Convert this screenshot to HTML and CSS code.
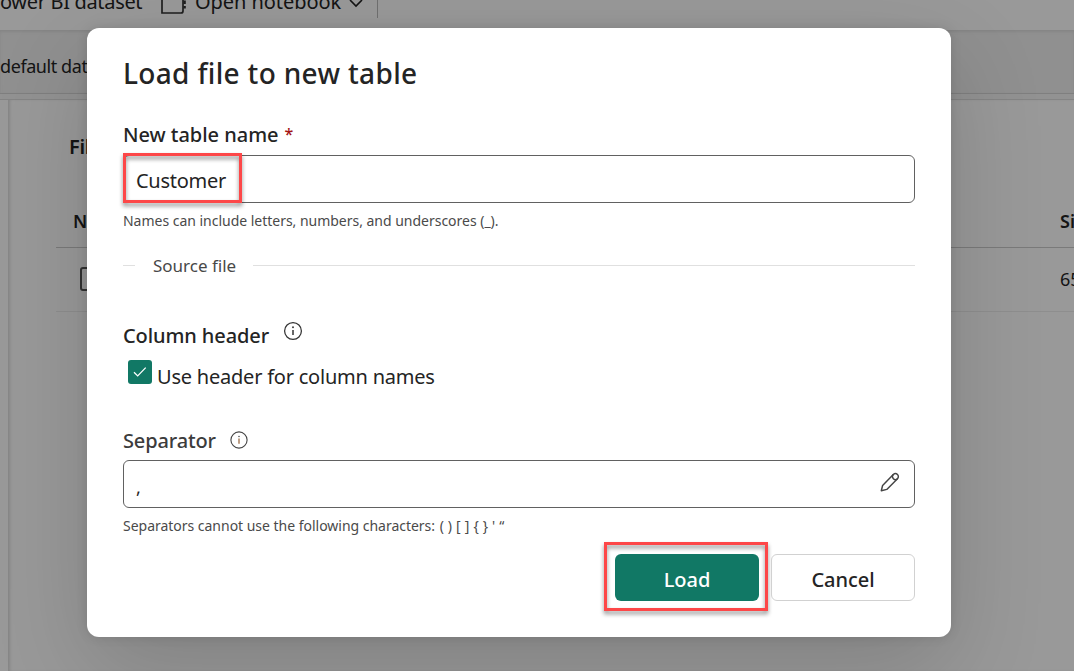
FILE: index.html
```html
<!DOCTYPE html>
<html lang="en">
<head>
<meta charset="utf-8">
<title>Load file to new table</title>
<link rel="stylesheet" href="styles.css">
</head>
<body>
<div class="app">
  <div class="toolbar">
    <span class="tool-dataset">ower BI dataset</span>
    <svg class="notebook-icon" width="28" height="28" viewBox="0 0 28 28" fill="none" stroke="#333" stroke-width="1.7"><path d="M4 2h17a2 2 0 0 1 2 2v19a2 2 0 0 1-2 2H2V4a2 2 0 0 1 2-2z"/><path d="M24.6 5v3M24.6 12.5v3.5M24.6 18v2.5" stroke-width="2.4"/></svg>
    <span class="tool-notebook">Open notebook</span>
    <svg class="chevron" width="14" height="9" viewBox="0 0 14 9" fill="none" stroke="#222" stroke-width="1.6"><path d="M1 1l6 6 6-6"/></svg>
    <span class="tool-divider"></span>
  </div>
  <div class="subbar"><span>default dat</span></div>
  <div class="workspace">
    <div class="rail"></div>
    <div class="files">
      <div class="files-title">Files</div>
      <div class="table-head"><span>Name</span><span class="size">Size</span></div>
      <div class="table-row"><span class="row-check"></span><span class="size">65</span></div>
    </div>
  </div>
</div>
<div class="backdrop">
  <main class="dialog">
    <h1 class="title"><span>Load file to new table</span></h1>
    <label class="label name-label"><span>New table name</span> <b class="required">*</b></label>
    <div class="field name-field"><span class="name-value">Customer</span><i class="mark mark-name"></i></div>
    <p class="hint name-hint"><span>Names can include letters, numbers, and underscores (_).</span></p>
    <div class="section"><span class="section-text">Source file</span></div>
    <div class="label header-label"><span class="header-text">Column header</span>
      <svg class="info header-info" width="20" height="20" viewBox="0 0 20 20" fill="none" stroke="#333" stroke-width="1.25"><circle cx="10" cy="10" r="8.4"/><path d="M10 9v5" stroke-width="1.5"/><circle cx="10" cy="6.3" r=".95" fill="#333" stroke="none"/></svg>
    </div>
    <div class="option"><span class="checkbox"><svg width="24" height="24" viewBox="0 0 24 24" fill="none" stroke="#fff" stroke-width="1.3"><path d="M6 12.3l3.7 3.6 8-8.3"/></svg></span><span class="option-text">Use header for column names</span></div>
    <div class="label separator-label"><span class="separator-text">Separator</span>
      <svg class="info" width="20" height="20" viewBox="0 0 20 20" fill="none" stroke="#444" stroke-width="1.1"><circle cx="10" cy="10" r="8.1"/><path d="M10 8.5v5.2" stroke="#9a6b45" stroke-width="1.3"/><circle cx="10" cy="6.5" r=".8" fill="#555" stroke="none"/></svg>
    </div>
    <div class="field separator-field"><span class="separator-value">,</span>
      <svg class="pencil" width="20" height="20" viewBox="0 0 20 20" fill="none" stroke="#444" stroke-width="1.45" stroke-linejoin="round"><path d="M1.3 18.7l1.3-5.2L13.3 2.5a2.9 2.9 0 0 1 4.2 4.2L6.8 17.4z"/><path d="M13.3 2.6a2.9 2.9 0 0 0 4.1 4.1"/></svg>
    </div>
    <p class="hint separator-hint"><span>Separators cannot use the following characters: </span><span class="chars">( ) [ ] { } ' “</span></p>
    <div class="actions">
      <div class="button primary"><span>Load</span><i class="mark mark-load"></i></div>
      <div class="button secondary"><span>Cancel</span></div>
    </div>
  </main>
</div>
</body>
</html>
```
FILE: styles.css
```css
* { box-sizing: border-box; }
body {
  margin: 0;
  width: 1074px;
  height: 671px;
  overflow: hidden;
  position: relative;
  font-family: "Noto Sans", "Open Sans", sans-serif;
  color: #242424;
  background: #fff;
}
.app { height: 671px; display: flex; flex-direction: column; overflow: hidden; }
.toolbar {
  height: 30px;
  display: flex;
  flex: none;
  overflow: hidden;
  font-size: 20px;
  line-height: 28px;
  white-space: nowrap;
}
.toolbar span { margin-top: -12px; }
.tool-dataset { width: 143px; letter-spacing: -.33px; }
.notebook-icon { margin: -12px 5px 0 17px; flex: none; }
.tool-notebook { margin-left: 2px; width: 147px; letter-spacing: -.05px; }
.chevron { margin: -1px 0 0 7px; }
.toolbar .tool-divider { margin: 0 0 0 14px; width: 1px; height: 18px; background: #bbb; }
.subbar {
  height: 64px;
  flex: none;
  border-bottom: 1px solid #d4d4d4;
  background: #f0f0f0;
  box-shadow: inset 0 2px 3px #dedede;
  padding-top: 23px;
  font-size: 18px;
  line-height: 26px;
  letter-spacing: -.42px;
}
.workspace { flex: 1; display: flex; padding-top: 5px; background: #f3f3f3; }
.rail { width: 8px; background: #fff; border-top: 1px solid #ddd; }
.files { flex: 1; background: #fff; padding-left: 48px; border-top: 1px solid #ddd; box-shadow: inset 3px 0 3px -1px #ddd; }
.files-title { height: 99px; padding: 33px 0 0 13px; font-size: 20px; line-height: 28px; font-weight: 600; letter-spacing: -.3px; }
.table-head {
  height: 49px;
  border-bottom: 1px solid #ccc;
  display: flex;
  justify-content: space-between;
  padding: 9px 0 0 17px;
  font-size: 18px;
  line-height: 26px;
  font-weight: 600;
  overflow: hidden;
}
.table-row {
  height: 64px;
  border-bottom: 1px solid #ededed;
  display: flex;
  justify-content: space-between;
  padding: 19px 0 0 24px;
  font-size: 18px;
  line-height: 25px;
}
.size { width: 14px; }
.row-check { width: 24px; height: 24px; border: 2px solid #555; border-radius: 3px; }
.backdrop { position: absolute; inset: 0; background: rgba(0,0,0,.4); padding: 28px 123px 0 87px; }
.dialog {
  height: 609px;
  display: flex;
  flex-direction: column;
  padding: 27px 36px 36px;
  background: #fff;
  border-radius: 12px;
  box-shadow: 0 0 12px rgba(0,0,0,.12), 0 32px 96px rgba(0,0,0,.16);
  white-space: nowrap;
}
.title { margin: 0; height: 60px; font-size: 28px; line-height: 37px; font-weight: 500; letter-spacing: .34px; }
.label { height: 28px; font-size: 20px; line-height: 30px; font-weight: 500; letter-spacing: -.03px; display: flex; }
.name-label { height: 40px; padding-top: 5px; }
.required { margin: -1px 0 0 6px; color: #a31515; font-size: 16px; font-weight: 500; }
.field {
  position: relative;
  height: 48px;
  flex: none;
  border: 1px solid #616161;
  border-radius: 6px;
  padding: 10px 12px;
  font-size: 20px;
  line-height: 30px;
}
.name-value { letter-spacing: -.27px; }
.mark { position: absolute; border: 3px solid #fd4748; filter: drop-shadow(0 3px 2px rgba(0,0,0,.45)); }
.mark-name { left: -1px; top: -3px; width: 119px; height: 50px; }
.hint { margin: 0; color: #4a4a4a; font-size: 14px; line-height: 20px; letter-spacing: -.02px; }
.name-hint { padding-top: 8px; height: 43px; }
.section { height: 38px; display: flex; align-items: center; color: #484848; font-size: 17px; line-height: 26px; }
.section-text { padding-top: 2px; }
.section::before { content: ""; width: 12px; height: 1px; margin-right: 18px; background: #e0e0e0; }
.section::after { content: ""; flex: 1; height: 1px; margin-left: 17px; background: #e0e0e0; }
.header-label { margin-top: 37px; }
.header-text { width: 146px; letter-spacing: -.1px; }
.separator-text { width: 93px; letter-spacing: -.15px; }
.info { margin: 4px 0 0 13px; }
.header-info { margin: 0 0 0 14px; }
.option { margin-top: 8px; height: 32px; padding-left: 5px; display: flex; gap: 5px; font-size: 20px; line-height: 40px; }
.option-text { letter-spacing: -.22px; }
.checkbox { width: 24px; height: 24px; margin-top: 3px; background: #117865; border-radius: 3px; line-height: 0; }
.separator-label { margin-top: 37px; height: 34px; color: #3c3c3c; }
.separator-value { display: block; padding-top: 1px; font-size: 18px; }
.pencil { position: absolute; right: 14px; top: 11px; }
.separator-hint { padding-top: 8px; height: 46px; }
.chars { margin-left: 1px; letter-spacing: .2px; }
.actions { display: flex; justify-content: flex-end; gap: 12px; height: 47px; }
.button { width: 144px; height: 47px; border-radius: 6px; text-align: center; font-size: 20px; line-height: 51px; font-weight: 500; letter-spacing: -.05px; position: relative; }
.primary { color: #fff; background: #117865; }
.secondary { border: 1px solid #d1d1d1; line-height: 49px; }
.mark-load { left: -11px; top: -12px; width: 164px; height: 69px; }
```
